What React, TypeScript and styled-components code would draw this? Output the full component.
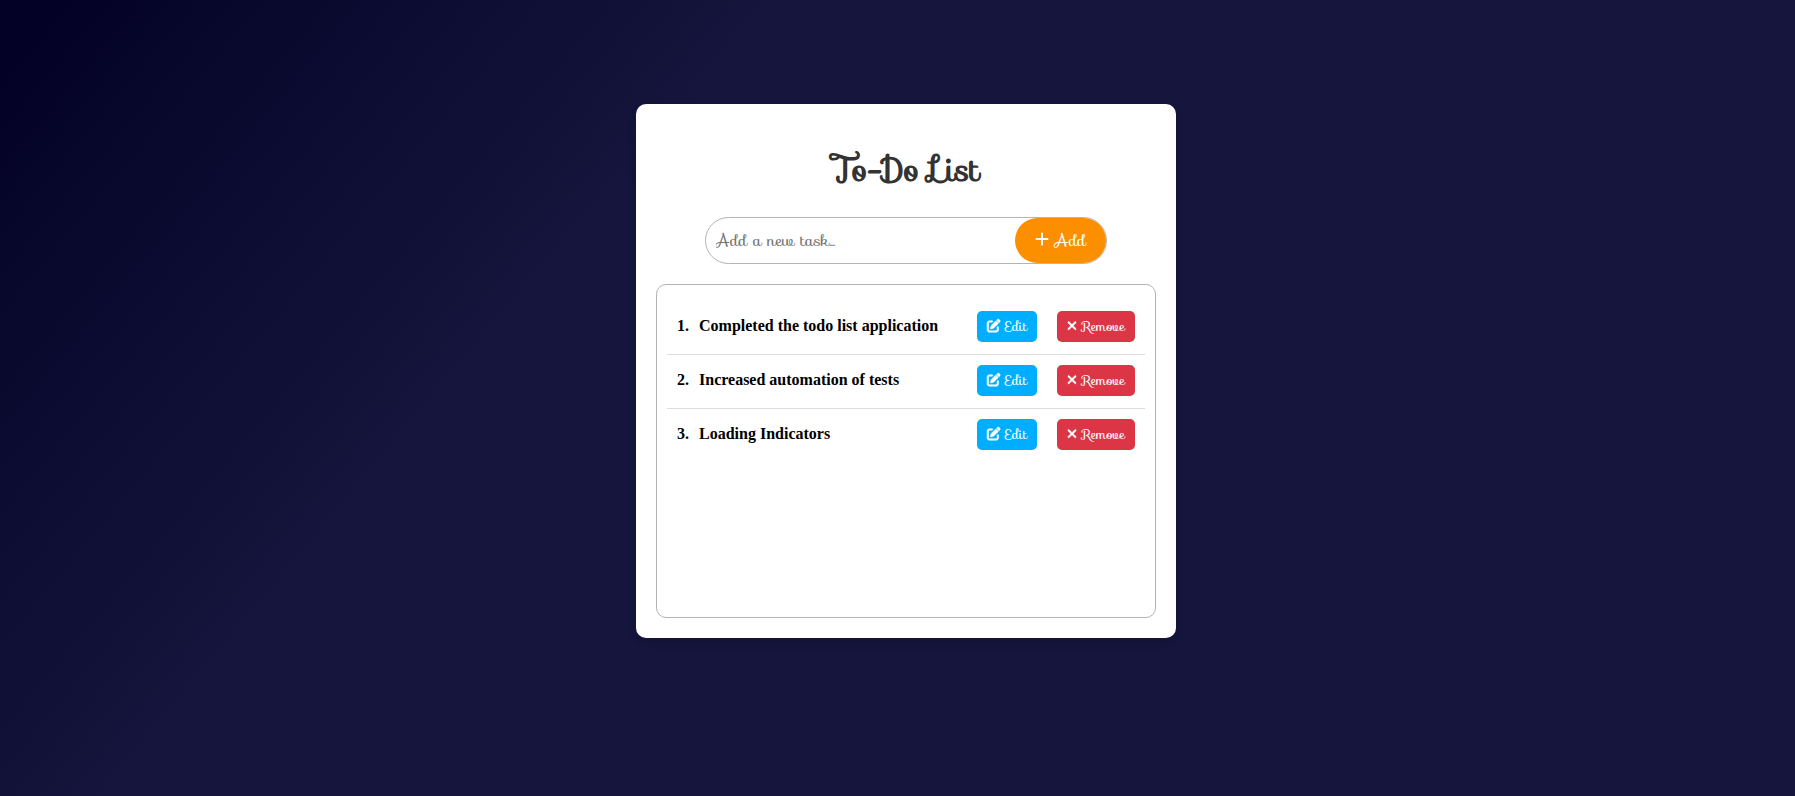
import React, { useState } from "react";
import styled, { createGlobalStyle } from "styled-components";
import { FaPenToSquare, FaPlus, FaXmark } from "react-icons/fa6";

const script = `"Sofia", cursive`;

const GlobalStyle = createGlobalStyle`
  body {
    margin: 0;
    min-height: 100vh;
    font-family: "Liberation Serif", serif;
    background: linear-gradient(130deg, #020024 0%, #15153d 32%) no-repeat fixed;
  }
`;

const Page = styled.main`
  display: flex;
  justify-content: center;
  padding: 104px 0 64px 17px;
`;

const Card = styled.section`
  box-sizing: border-box;
  width: 100%;
  max-width: 540px;
  padding: 20px;
  border-radius: 10px;
  background: #fff;
  box-shadow: 0 4px 8px rgba(0, 0, 0, 0.1);
`;

const Title = styled.h1`
  margin: 22px 0;
  font: bold 32px/49px ${script};
  color: #333;
  text-align: center;
`;

const AddForm = styled.form`
  display: flex;
  width: 80%;
  height: 45px;
  margin: 0 auto 20px;
  border: 1px solid #b4b4b4;
  border-radius: 24px;
`;

const TaskInput = styled.input`
  flex: 1;
  min-width: 0;
  padding: 10px;
  border: 0;
  border-radius: 24px;
  outline: 0;
  background: transparent;
  font: 16px ${script};
`;

const Button = styled.button`
  border: 0;
  color: #fff;
  font-family: ${script};
  white-space: nowrap;
  cursor: pointer;

  svg {
    vertical-align: -0.125em;
  }
`;

const AddButton = styled(Button)`
  padding: 0 20px;
  border-radius: 24px;
  background: #fb8f00;
  font-size: 16px;

  svg {
    width: 0.875em;
    vertical-align: -1px;
  }
`;

const TaskList = styled.ol`
  box-sizing: border-box;
  min-height: 334px;
  margin: 0;
  padding: 16px 10px;
  border: 1px solid #b4b4b4;
  border-radius: 10px;
  list-style: none;
`;

const TaskRow = styled.li`
  display: flex;
  align-items: flex-start;
  gap: 20px;
  padding: 10px 10px 12px;
  border-bottom: 1px solid #ddd;
  font-weight: bold;
  font-size: 16px;

  &:last-child {
    border-bottom: 0;
  }
`;

const TaskText = styled.span`
  display: flex;
  flex: 1;
  gap: 10px;
  line-height: 30px;
`;

const ActionButton = styled(Button)<{ $tone: string }>`
  height: 31px;
  padding: 0 10px;
  border-radius: 5px;
  background: ${(p) => p.$tone};

  svg {
    overflow: visible;
    stroke-width: 18px;
  }
`;

const CrossIcon = styled(FaXmark)`
  width: 0.75em;
`;

const initialTasks = [
  "Completed the todo list application",
  "Increased automation of tests",
  "Loading Indicators",
];

export default function App() {
  const [tasks, setTasks] = useState(initialTasks);
  const [draft, setDraft] = useState("");

  const addTask = (e: React.FormEvent) => {
    e.preventDefault();
    if (!draft.trim()) return;
    setTasks([...tasks, draft.trim()]);
    setDraft("");
  };

  const removeTask = (index: number) => setTasks(tasks.filter((_, i) => i !== index));

  const editTask = (index: number) => {
    setDraft(tasks[index]);
    removeTask(index);
  };

  return (
    <>
      <GlobalStyle />
      <Page>
        <Card>
          <Title>To-Do List</Title>
          <AddForm onSubmit={addTask}>
            <TaskInput
              aria-label="New task"
              placeholder="Add a new task..."
              value={draft}
              onChange={(e) => setDraft(e.target.value)}
            />
            <AddButton type="submit">
              <FaPlus /> Add
            </AddButton>
          </AddForm>
          <TaskList>
            {tasks.map((task, i) => (
              <TaskRow key={task}>
                <TaskText>
                  <span>{i + 1}.</span>
                  <span>{task}</span>
                </TaskText>
                <ActionButton type="button" $tone="#00aeff" onClick={() => editTask(i)}>
                  <FaPenToSquare /> Edit
                </ActionButton>
                <ActionButton type="button" $tone="#dc3545" onClick={() => removeTask(i)}>
                  <CrossIcon /> Remove
                </ActionButton>
              </TaskRow>
            ))}
          </TaskList>
        </Card>
      </Page>
    </>
  );
}
